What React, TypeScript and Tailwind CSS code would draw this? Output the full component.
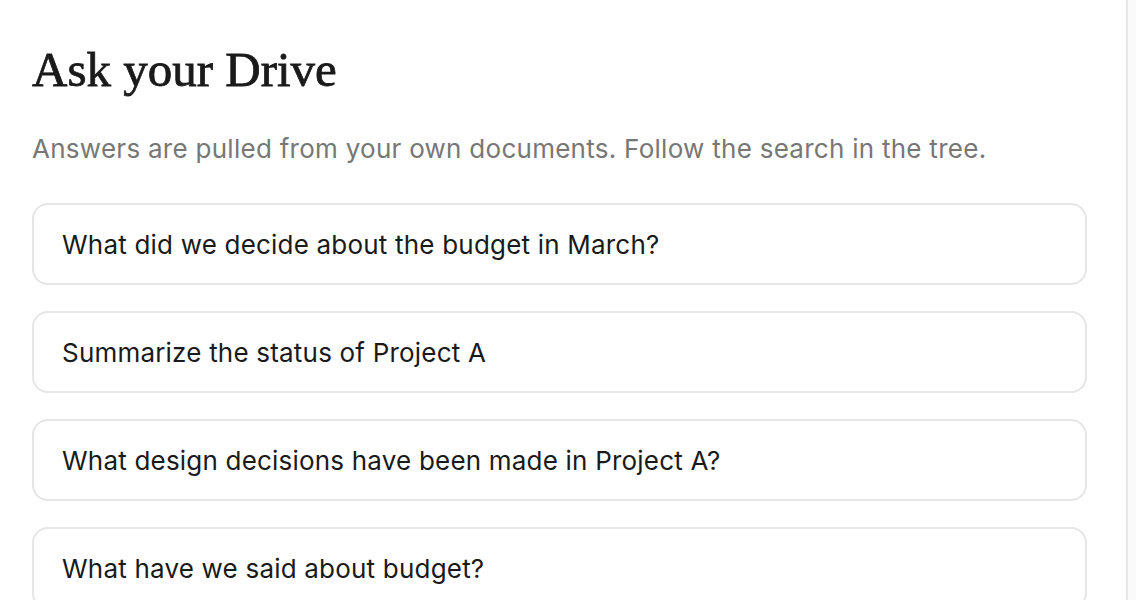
import React from 'react';

const questions = [
  'What did we decide about the budget in March?',
  'Summarize the status of Project A',
  'What design decisions have been made in Project A?',
  'What have we said about budget?',
];

export default function App() {
  return (
    <div className="flex h-[600px] w-full overflow-hidden bg-white">
      <main className="w-[1128px] shrink-0 border-r-2 border-[#e8e8e8] pl-[32px] pr-[39px] pt-[40px]">
        <h1 className="text-[49px] leading-[60px] text-[#1a1a1a] font-['Liberation_Serif',serif] [-webkit-text-stroke:0.8px_#1a1a1a]">
          Ask your Drive
        </h1>
        <p className="mt-[32px] text-[26px] leading-[34px] text-[#777777] font-['Inter',sans-serif] tracking-[0.27px]">
          Answers are pulled from your own documents. Follow the search in the tree.
        </p>
        <div className="mt-[37px] flex flex-col gap-[26px]">
          {questions.map((q) => (
            <button
              key={q}
              className="flex h-[82px] w-full items-center rounded-[16px] border-2 border-[#e6e6e6] bg-white px-[28px] text-left text-[26px] text-[#1a1a1a] font-['Inter',sans-serif] tracking-[0.2px]"
            >
              {q}
            </button>
          ))}
        </div>
      </main>
      <aside className="flex-1 bg-[#fafafa]" />
    </div>
  );
}
